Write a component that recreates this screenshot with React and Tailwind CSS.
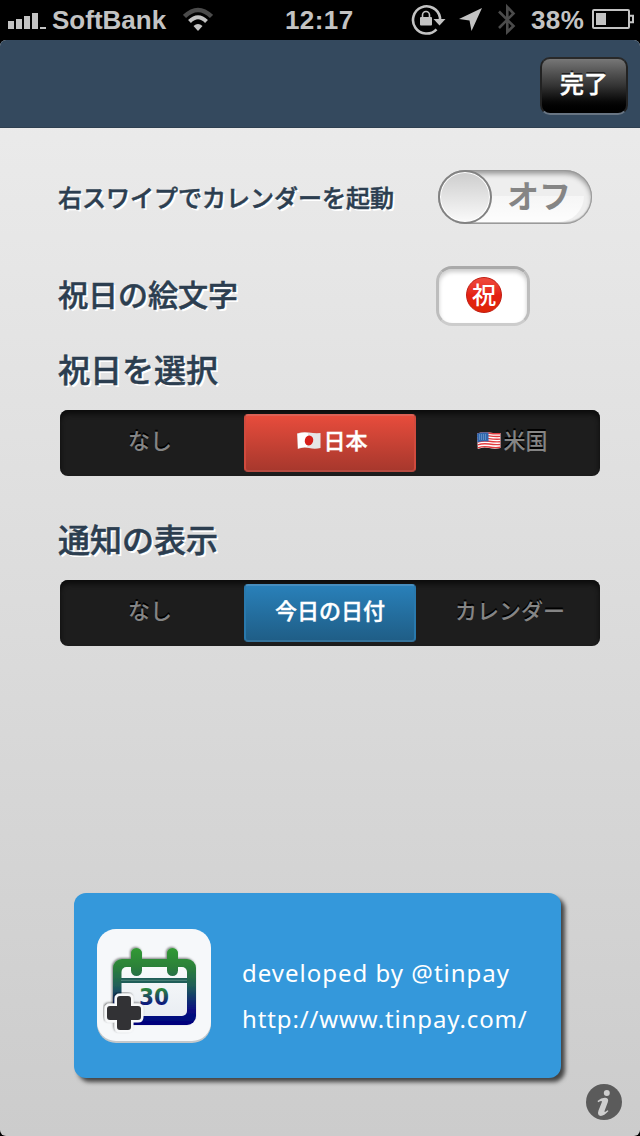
const JP = "font-['Noto_Sans_CJK_JP',sans-serif]";
const LABEL = "block whitespace-nowrap font-medium leading-none text-[#2c3e50] [-webkit-text-stroke:0.5px_#2c3e50] [text-shadow:2px_2px_0_#fff]";

function StatusBar() {
  return (
    <div className="flex h-10 w-full items-center bg-black pl-2 font-['Liberation_Sans',sans-serif] text-[26px] font-bold leading-10 text-[#c3c3c3]">
      <svg className="h-10 w-[38px] shrink-0" viewBox="0 0 38 40" fill="currentColor">
        <path d="M0 21h6v8H0zM8 19h6v10H8zM16 16h6v13h-6zM24 13h6v16h-6zM32 27h6v2h-6z" />
      </svg>
      <span className="ml-[6px] w-[131px] shrink-0">SoftBank</span>
      <svg className="h-10 w-[30px] shrink-0" viewBox="0 0 30 40" fill="none">
        <path d="M1.5 16.5Q15 3.5 28.500 16.500" stroke="#4b4b4b" strokeWidth="4.500" />
        <path d="M6.500 21.500Q15 13 23.500 21.500" stroke="#c3c3c3" strokeWidth="4" />
        <path d="M10.500 26Q15 21.800 19.500 26L15 31z" fill="#c3c3c3" />
      </svg>
      <span className="ml-[72px] w-[126px] shrink-0 tracking-[0.4px]">12:17</span>
      <svg className="h-10 w-[35px] shrink-0" viewBox="0 0 35 40" fill="none">
        <path d="M25.500 29.300A13.600 13.600 0 1 1 29 17.500V20" stroke="currentColor" strokeWidth="2.600" />
        <path d="M22.500 19h12L28.500 25.500z" fill="currentColor" />
        <rect x="9" y="17" width="12" height="8.500" rx="1" fill="currentColor" />
        <path d="M11.500 18v-3a3.500 3.500 0 0 1 7 0v3" stroke="currentColor" strokeWidth="1.600" />
      </svg>
      <svg className="ml-[13px] h-10 w-[23px] shrink-0" viewBox="0 0 23 40" fill="currentColor">
        <path d="M23 8L12.500 31L10.500 20.500L0 19z" />
      </svg>
      <svg className="ml-[16px] h-10 w-[18px] shrink-0" viewBox="0 0 18 40" fill="none" stroke="#4b4b4b" strokeWidth="2.600">
        <path d="M1 11.500L15.500 26L9.300 32V7L15.500 13.500L1 28" />
      </svg>
      <span className="ml-[15px] w-[61px] shrink-0 tracking-[0.4px]">38%</span>
      <svg className="h-10 w-[42px] shrink-0" viewBox="0 0 42 40" fill="none">
        <rect x="1" y="10" width="36" height="18" rx="1" stroke="currentColor" strokeWidth="2" />
        <rect x="4" y="13" width="10" height="12" fill="currentColor" />
        <path d="M38 15.800h3v6.500h-3" stroke="currentColor" strokeWidth="2" />
      </svg>
    </div>
  );
}

function Toggle() {
  return (
    <div className="relative flex h-[54px] w-[154px] shrink-0 overflow-hidden rounded-full bg-[#eee] shadow-[inset_0_0_0_1px_#999,inset_0_-1px_1px_1px_#bbb,inset_0_4px_5px_#999]">
      <div className="absolute bottom-[2px] left-4 right-2 h-[26px] rounded-tr-[16px] rounded-br-full bg-linear-to-b from-[#f6f6f6] to-[#fdfdfd]" />
      <div className="relative h-[54px] w-[54px] shrink-0 rounded-full border-2 border-[#828282] bg-linear-to-b from-[#cdcdcd] to-[#fafafa] shadow-[inset_0_0_0_1px_#fff]" />
      <span className={JP + " relative ml-[15px] whitespace-nowrap text-[32px] font-bold leading-[49px] text-[#858585]"}>オフ</span>
    </div>
  );
}

function JapanFlag() {
  return (
    <svg className="h-[20px] w-[24px] shrink-0" viewBox="0 0 24 20">
      <path d="M0 2.500Q6 .5 12 1.500T23.500 2V17Q18 18.500 12 17T.8 18z" fill="#e6e6e6" />
      <path d="M1 3Q5 1 11 2L10 16Q5 16 1 17z" fill="#fff" />
      <ellipse cx="12" cy="9.500" rx="4.200" ry="5" fill="#d61f1a" transform="rotate(15 12 9.500)" />
    </svg>
  );
}

function UsaFlag() {
  return (
    <svg className="h-[20px] w-[24px] shrink-0" viewBox="0 0 24 20">
      <path d="M0 2.500Q6 .5 12 1.500T23.500 2V17Q18 18.500 12 17T.8 18z" fill="#fff" />
      <g fill="none" stroke="#e33c40" strokeWidth="1.400">
        <path d="M.3 3Q6 1.300 12 2.200T23.500 2.700M.3 5.700Q6 4 12 4.900T23.500 5.400M.3 8.400Q6 6.700 12 7.600T23.500 8.100M.5 11.100Q6 9.400 12 10.300T23.500 10.800M.6 13.800Q6 12.100 12 13T23.500 13.500M.8 16.800Q6 15 12 16T23.500 16.300" />
      </g>
      <path d="M0 2.500Q6 .5 11.500 1.500V10.500Q6 9.500.4 11.500z" fill="#3167ad" />
      <path d="M2 4h8M2 6h8M2 8h8" stroke="#a5c6e7" strokeWidth=".8" strokeDasharray="1 1" />
    </svg>
  );
}

const SLOT = [
  "w-[180px] pr-2 text-[#858585] [text-shadow:0_-2px_0_#000]",
  "w-[172px] rounded-[4px] border-2 text-white [-webkit-text-stroke:0.4px_#fff] ",
  "w-[180px] pl-2 text-[#858585] [text-shadow:0_-2px_0_#000]",
];

function Segments({ items, active }) {
  return (
    <div className="flex h-[66px] w-[540px] rounded-lg bg-[#1d1d1d] p-1 shadow-[inset_0_4px_5px_#0c0c0c]">
      {items.map((item, i) => (
        <div
          key={item.text}
          className={
            JP +
            " flex h-[58px] items-center justify-center pb-[7px] text-[22px] font-medium " +
            SLOT[i] +
            (i === 1 ? active : "")
          }
        >
          {item.icon && <span className="ml-[5px] mr-[2px] mt-[3px]">{item.icon}</span>}
          <span>{item.text}</span>
        </div>
      ))}
    </div>
  );
}

function CalendarIcon() {
  return (
    <svg className="h-[114px] w-[114px] shrink-0" viewBox="0 0 114 114">
      <defs>
        <linearGradient id="cal" gradientUnits="userSpaceOnUse" x1="0" y1="18" x2="0" y2="96">
          <stop offset="0" stopColor="#329b34" />
          <stop offset=".25" stopColor="#2c8139" />
          <stop offset=".5" stopColor="#205e58" />
          <stop offset=".8" stopColor="#081180" />
          <stop offset="1" stopColor="#02037c" />
        </linearGradient>
        <linearGradient id="digits" gradientUnits="userSpaceOnUse" x1="0" y1="59" x2="0" y2="77">
          <stop offset="0" stopColor="#2e8b3a" />
          <stop offset="1" stopColor="#080a86" />
        </linearGradient>
        <linearGradient id="paper" x1="0" y1="0" x2="0" y2="1">
          <stop offset="0" stopColor="#f8fafb" />
          <stop offset="1" stopColor="#e9edf2" />
        </linearGradient>
        <filter id="soft"><feDropShadow dx="-1" dy="-1" stdDeviation="1" floodOpacity=".5" /></filter>
      </defs>
      <rect x="0" y="1" width="114" height="113" rx="19" fill="#c3c8cb" />
      <rect x="0" y="0" width="114" height="112" rx="19" fill="#f6f8fa" />
      <g filter="url(#soft)">
        <rect x="16" y="30" width="83" height="66" rx="9" fill="url(#cal)" />
        <rect x="34" y="19" width="11" height="28" rx="5.500" fill="url(#cal)" />
        <rect x="70" y="19" width="11" height="28" rx="5.500" fill="url(#cal)" />
      </g>
      <rect x="24.500" y="38" width="65.500" height="49" rx="5" fill="url(#paper)" />
      <rect x="24" y="49" width="66" height="5" fill="#205e58" />
      <path d="M24 51.300h66" stroke="#5e9184" strokeWidth=".8" />
      <rect x="34" y="20" width="11" height="27" rx="5.500" fill="url(#cal)" />
      <rect x="70" y="20" width="11" height="27" rx="5.500" fill="url(#cal)" />
      <text x="42" y="76" fontFamily="'DejaVu Sans', sans-serif" fontSize="23" fontWeight="bold" textLength="30" lengthAdjust="spacingAndGlyphs" fill="url(#digits)">30</text>
      <path d="M23 67h8q3 0 3 3v7h7q3 0 3 3v8q0 3-3 3h-7v7q0 3-3 3H23q-3 0-3-3v-7h-7q-3 0-3-3v-8q0-3 3-3h7v-7q0-3 3-3z" fill="#303236" stroke="#f8f9fa" strokeWidth="5" strokeLinejoin="round" paintOrder="stroke" filter="url(#soft)" />
    </svg>
  );
}

function InfoIcon() {
  return (
    <svg className="h-9 w-9" viewBox="0 0 36 36">
      <circle cx="18" cy="18" r="18" fill="#5b5b5b" />
      <circle cx="20.800" cy="9" r="3" fill="#cecece" />
      <path d="M11.500 17Q15.500 13.300 19.500 13.700Q23.300 14.300 21.700 18.500L18.700 26.500Q17.700 29.500 21.500 26.200L22.500 27Q17.500 32.500 14 31.800Q11 30.900 12.500 26.500L15.700 18.500Q16.800 15.700 12.200 18.200z" fill="#cecece" />
    </svg>
  );
}

export default function App() {
  return (
    <div className="h-[1136px] w-[640px] overflow-hidden bg-black">
      <StatusBar />
      <div className="flex h-[1096px] flex-col overflow-hidden rounded-[6px] bg-linear-to-b from-[#ededed] to-[#cccccc]">
        <header className="flex h-[88px] shrink-0 justify-end border-b border-[#2f4051] bg-[#34495e] pr-3 pt-[17px]">
          <button className={JP + " flex h-[58px] w-[88px] items-center justify-center rounded-[10px] border-2 border-t-[#292929] border-x-[#222] border-b-[#687583] bg-linear-to-b from-[#777] via-[#333] via-50% to-black pb-[6px] text-[24px] font-medium text-white [-webkit-text-stroke:0.4px_#fff] [text-shadow:0_-2px_0_#222]"}>
            完了
          </button>
        </header>
        <main className="flex grow flex-col pl-[58px]">
          <div className="mt-[42px] flex h-[54px] items-center">
            <span className={JP + " " + LABEL + " w-[380px] pb-px text-[24px]"}>右スワイプでカレンダーを起動</span>
            <Toggle />
          </div>
          <div className="mt-[42px] flex h-[60px] items-center">
            <span className={JP + " " + LABEL + " w-[378px] pb-[7px] text-[30px]"}>祝日の絵文字</span>
            <div className="flex h-[60px] w-[94px] items-center justify-center rounded-[16px] border-[3px] border-t-[#aaa] border-x-[#bdbdbd] border-b-[#ccc] bg-white pb-[2px] shadow-[inset_0_3px_4px_#ccc]">
              <span className={JP + " mr-[-2px] flex h-9 w-9 items-center justify-center rounded-full border border-[#bf1c11] bg-linear-to-b from-[#ef4a3d] via-[#e42113] to-[#df2506] pb-[2px] text-[24px] font-medium leading-none text-white"}>祝</span>
            </div>
          </div>
          <h2 className={JP + " " + LABEL + " mt-[26px] h-[58px] text-[32px]"}>祝日を選択</h2>
          <div className="pl-[2px]">
            <Segments
              active="border-x-[#d14a3d] border-t-[#dc6155] border-b-[#b54a40] bg-linear-to-b from-[#e74c3c] to-[#a8382d]"
              items={[{ text: "なし" }, { text: "日本", icon: <JapanFlag /> }, { text: "米国", icon: <UsaFlag /> }]}
            />
          </div>
          <h2 className={JP + " " + LABEL + " mt-[46px] h-[58px] text-[32px]"}>通知の表示</h2>
          <div className="pl-[2px]">
            <Segments
              active="border-x-[#2979ad] border-t-[#478ebf] border-b-[#34729a] bg-linear-to-b from-[#2980b9] to-[#1f5e87]"
              items={[{ text: "なし" }, { text: "今日の日付" }, { text: "カレンダー" }]}
            />
          </div>
          <section className="ml-4 mt-[247px] flex h-[185px] w-[487px] rounded-[12px] bg-[#3498db] pl-[23px] pt-9 shadow-[4px_4px_4px_#444]">
            <CalendarIcon />
            <div className="ml-[31px] mt-[21px] whitespace-nowrap font-['Noto_Sans',sans-serif] text-[24px] leading-[46px] text-white">
              <p className="tracking-[1px]">developed by @tinpay</p>
              <p className="tracking-[0.88px]">http://www.tinpay.com/</p>
            </div>
          </section>
          <div className="mt-[6px] flex justify-end pr-[18px]">
            <InfoIcon />
          </div>
        </main>
      </div>
    </div>
  );
}
